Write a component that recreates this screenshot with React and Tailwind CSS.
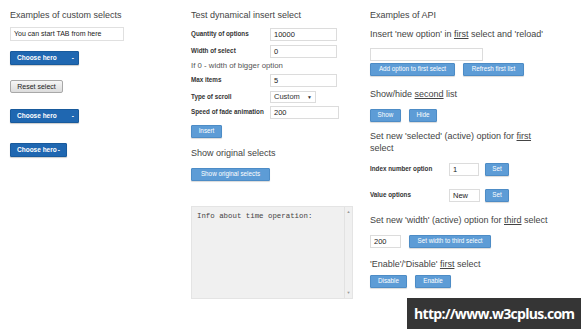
import React from 'react';

const font = { fontFamily: '"Liberation Sans", Arial, sans-serif' };

const LightBtn = ({ children, className = '' }) => (
  <button className={`h-[13px] px-0 bg-[#5d9cd6] border border-[#4d8cc6] rounded-[1px] text-white text-[6.3px] leading-none whitespace-nowrap shadow-[0_1px_1px_rgba(0,0,0,0.15)] ${className}`}>
    {children}
  </button>
);

const HeroBtn = ({ label, className = '' }) => (
  <button className={`h-[14px] pl-[6px] pr-[5px] bg-[#1f67b1] border border-[#185a9c] rounded-[1px] text-white text-[6.5px] font-bold leading-none whitespace-nowrap flex items-center shadow-[0_1px_1px_rgba(0,0,0,0.2)] ${className}`}>
    {label}
  </button>
);

const Field = ({ value, className = '' }) => (
  <div className={`h-[13px] border border-[#dcdcdc] bg-white text-[7.5px] leading-[11px] pl-[3px] text-[#222] whitespace-nowrap ${className}`}>{value}</div>
);

const Row = ({ label, children, className = '' }) => (
  <div className={`flex items-center ${className}`}>
    <div className="w-[79px] text-[6.3px] font-bold text-[#333] leading-none whitespace-nowrap">{label}</div>
    {children}
  </div>
);

const H = ({ children, className = '' }) => (
  <div className={`text-[9px] leading-[12px] text-[#444] whitespace-nowrap ${className}`}>{children}</div>
);

export default function App() {
  return (
    <div className="relative w-[581px] h-[329px] bg-white overflow-hidden text-[#333]" style={font}>
      <div className="flex">
        {/* Column 1 */}
        <div className="w-[191px] pl-[10px] pt-[9px]">
          <H>Examples of custom selects</H>
          <Field value="You can start TAB from here" className="mt-[6px] w-[114px] h-[14px] text-[7px] leading-[12px] border-[#e0e0e0]" />
          <HeroBtn label={<><span>Choose hero</span><span className="ml-[15px]">-</span></>} className="mt-[10px] w-[69px]" />
          <button className="block mt-[15px] h-[13px] w-[53px] border border-[#a8a8a8] rounded-[2px] bg-gradient-to-b from-[#f6f6f6] to-[#dcdcdc] text-[7px] text-[#222] leading-none whitespace-nowrap">Reset select</button>
          <HeroBtn label={<><span>Choose hero</span><span className="ml-[15px]">-</span></>} className="mt-[16px] w-[69px]" />
          <HeroBtn label={<><span>Choose hero</span><span className="ml-[1px]">-</span></>} className="mt-[20px] w-[57px]" />
        </div>

        {/* Column 2 */}
        <div className="w-[169px] pt-[9px]">
          <H>Test dynamical insert select</H>
          <Row label="Quantity of options" className="mt-[7px]"><Field value="10000" className="w-[67px]" /></Row>
          <Row label="Width of select" className="mt-[4px]"><Field value="0" className="w-[67px]" /></Row>
          <div className="mt-[2px] text-[7.8px] leading-[12px] text-[#555] whitespace-nowrap">If 0 - width of bigger option</div>
          <Row label="Max items" className="mt-[2px]"><Field value="5" className="w-[67px]" /></Row>
          <Row label="Type of scroll" className="mt-[4px]">
            <div className="h-[12px] w-[46px] border border-[#dcdcdc] bg-white text-[7.5px] leading-[10px] pl-[3px] flex items-center justify-between pr-[3px]">
              <span>Custom</span>
              <span className="text-[5px]">▼</span>
            </div>
          </Row>
          <Row label="Speed of fade animation" className="mt-[3px]"><Field value="200" className="w-[69px]" /></Row>
          <LightBtn className="block mt-[6px] w-[31px]">Insert</LightBtn>
          <H className="mt-[9px]">Show original selects</H>
          <LightBtn className="block mt-[9px] w-[79px]">Show original selects</LightBtn>
          <div className="mt-[25px] w-[162px] h-[93px] bg-[#f0f0f0] border border-[#e4e4e4] flex">
            <div className="flex-1 pl-[5px] pt-[6px] text-[7.4px] leading-none text-[#444] whitespace-nowrap" style={{ fontFamily: '"Liberation Mono", "Courier New", monospace' }}>Info about time operation:</div>
            <div className="w-[8px] border-l border-[#e2e2e2] flex flex-col justify-between items-center text-[4px] text-[#999] py-[2px]">
              <span>▲</span><span>▼</span>
            </div>
          </div>
        </div>

        {/* Column 3 */}
        <div className="flex-1 pl-[10px] pt-[9px]">
          <H>Examples of API</H>
          <H className="mt-[7px]">Insert 'new option' in <span className="underline">first</span> select and 'reload'</H>
          <Field value="" className="mt-[8px] w-[113px]" />
          <div className="flex gap-[8px] mt-[2px]">
            <LightBtn className="w-[85px]">Add option to first select</LightBtn>
            <LightBtn className="w-[61px]">Refresh first list</LightBtn>
          </div>
          <H className="mt-[12px]">Show/hide <span className="underline">second</span> list</H>
          <div className="flex gap-[8px] mt-[9px]">
            <LightBtn className="w-[31px]">Show</LightBtn>
            <LightBtn className="w-[28px]">Hide</LightBtn>
          </div>
          <div className="mt-[8px] text-[9px] leading-[12px] text-[#444] w-[170px]">Set new 'selected' (active) option for <span className="underline">first</span> select</div>
          <div className="flex items-center mt-[9px]">
            <div className="w-[79px] text-[6.3px] font-bold leading-none whitespace-nowrap">Index number option</div>
            <Field value="1" className="w-[30px]" />
            <LightBtn className="ml-[6px] w-[24px]">Set</LightBtn>
          </div>
          <div className="flex items-center mt-[13px]">
            <div className="w-[79px] text-[6.3px] font-bold leading-none whitespace-nowrap">Value options</div>
            <Field value="New" className="w-[31px]" />
            <LightBtn className="ml-[5px] w-[24px]">Set</LightBtn>
          </div>
          <H className="mt-[12px]">Set new 'width' (active) option for <span className="underline">third</span> select</H>
          <div className="flex items-center mt-[9px]">
            <Field value="200" className="w-[31px]" />
            <LightBtn className="ml-[8px] w-[82px]">Set width to third select</LightBtn>
          </div>
          <H className="mt-[10px]">'Enable'/'Disable' <span className="underline">first</span> select</H>
          <div className="flex gap-[8px] mt-[5px]">
            <LightBtn className="w-[37px]">Disable</LightBtn>
            <LightBtn className="w-[36px]">Enable</LightBtn>
          </div>
        </div>
      </div>

      {/* Watermark */}
      <div className="absolute left-[407px] top-[298px] w-[174px] h-[31px] bg-[#353535] flex items-center pl-[7px]">
        <span className="text-white text-[14px] font-bold leading-none tracking-[-0.7px] whitespace-nowrap" style={{ fontFamily: '"Open Sans", "Noto Sans", sans-serif' }}>http://www.w3cplus.com</span>
      </div>
    </div>
  );
}
